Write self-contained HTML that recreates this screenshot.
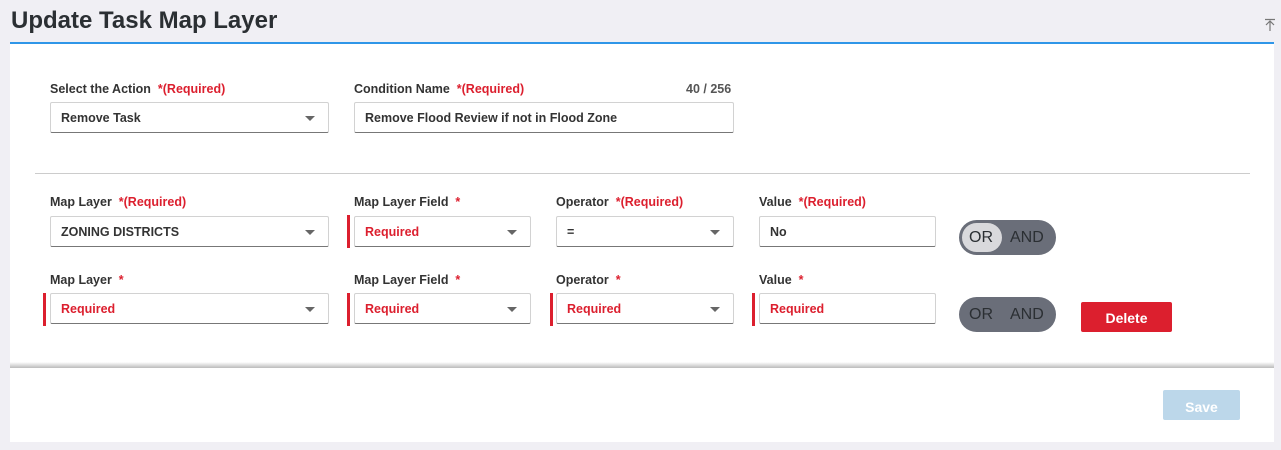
<!DOCTYPE html>
<html><head><style>
body{margin:0;width:1281px;height:450px;background:#f0eff4;font-family:"Liberation Sans",sans-serif;position:relative;overflow:hidden;color:#333}
.a{position:absolute}
h1{position:absolute;left:11px;top:7px;margin:0;font-size:24px;font-weight:bold;color:#2b2f33}
.lbl{position:absolute;font-size:12.5px;font-weight:bold;color:#333}
.lbl span{color:#dc1f2e}
.in{position:absolute;height:31px;background:#fff;border:1px solid #d2d2d2;border-bottom:1px solid #777;border-radius:2px;box-sizing:border-box;font-size:12.5px;font-weight:bold;line-height:30px;padding-left:10px;color:#333}
.in.r{color:#dc1f2e}
.in .c{position:absolute;right:13px;top:13px;width:0;height:0;border-left:5px solid transparent;border-right:5px solid transparent;border-top:5px solid #666}
.bar{position:absolute;width:3px;background:#dc1f2e}
.tog{position:absolute;width:97px;height:35px;border-radius:18px;background:#6a6e79;font-size:16px;color:#2b2f33;box-sizing:border-box}
.tog .k{position:absolute;left:3px;top:3px;width:40px;height:29px;border-radius:15px;background:#d9d9dc}
.tog .o{position:absolute;left:10px;top:9px}
.tog .n{position:absolute;left:51px;top:9px}
</style></head><body>
<h1>Update Task Map Layer</h1>
<div class="a" style="left:1264px;top:18px;font-size:13px;color:#777">
<svg width="12" height="14"><path d="M1 1.5H11M6 3V13M2 7L6 3L10 7" stroke="#777" fill="none" stroke-width="1.2"/></svg></div>
<div class="a" style="left:10px;top:42px;width:1264px;height:2px;background:#2f96e8"></div>
<div class="a" style="left:10px;top:44px;width:1264px;height:318px;background:#fff"></div>
<div class="a" style="left:10px;top:362px;width:1264px;height:6px;background:linear-gradient(#fff,#bbb)"></div>
<div class="a" style="left:10px;top:368px;width:1264px;height:74px;background:#fff"></div>

<div class="lbl" style="left:50px;top:82px">Select the Action &nbsp;<span>*(Required)</span></div>
<div class="in" style="left:50px;top:102px;width:279px">Remove Task<div class="c"></div></div>
<div class="lbl" style="left:354px;top:82px">Condition Name &nbsp;<span>*(Required)</span></div>
<div class="lbl" style="left:686px;top:82px;color:#555">40 / 256</div>
<div class="in" style="left:354px;top:102px;width:380px">Remove Flood Review if not in Flood Zone</div>

<div class="a" style="left:35px;top:173px;width:1215px;height:1px;background:#ccc"></div>

<div class="lbl" style="left:50px;top:195px">Map Layer &nbsp;<span>*(Required)</span></div>
<div class="in" style="left:50px;top:216px;width:279px">ZONING DISTRICTS<div class="c"></div></div>
<div class="lbl" style="left:354px;top:195px">Map Layer Field &nbsp;<span>*</span></div>
<div class="bar" style="left:347px;top:215px;height:33px"></div>
<div class="in r" style="left:354px;top:216px;width:177px">Required<div class="c"></div></div>
<div class="lbl" style="left:556px;top:195px">Operator &nbsp;<span>*(Required)</span></div>
<div class="in" style="left:556px;top:216px;width:178px">=<div class="c"></div></div>
<div class="lbl" style="left:759px;top:195px">Value &nbsp;<span>*(Required)</span></div>
<div class="in" style="left:759px;top:216px;width:177px">No</div>
<div class="tog" style="left:959px;top:220px"><div class="k"></div><span class="o">OR</span><span class="n">AND</span></div>

<div class="lbl" style="left:50px;top:273px">Map Layer &nbsp;<span>*</span></div>
<div class="bar" style="left:43px;top:293px;height:33px"></div>
<div class="in r" style="left:50px;top:293px;width:279px">Required<div class="c"></div></div>
<div class="lbl" style="left:354px;top:273px">Map Layer Field &nbsp;<span>*</span></div>
<div class="bar" style="left:347px;top:293px;height:33px"></div>
<div class="in r" style="left:354px;top:293px;width:177px">Required<div class="c"></div></div>
<div class="lbl" style="left:556px;top:273px">Operator &nbsp;<span>*</span></div>
<div class="bar" style="left:550px;top:293px;height:33px"></div>
<div class="in r" style="left:556px;top:293px;width:178px">Required<div class="c"></div></div>
<div class="lbl" style="left:759px;top:273px">Value &nbsp;<span>*</span></div>
<div class="bar" style="left:752px;top:293px;height:33px"></div>
<div class="in r" style="left:759px;top:293px;width:177px">Required</div>
<div class="tog" style="left:959px;top:297px"><span class="o">OR</span><span class="n">AND</span></div>
<div class="a" style="left:1081px;top:302px;width:91px;height:30px;background:#dc1f2e;border-radius:2px;color:#fff;font-weight:bold;font-size:14px;text-align:center;line-height:32px">Delete</div>

<div class="a" style="left:1163px;top:390px;width:77px;height:30px;background:#bcd7ea;border-radius:2px;color:#fff;font-weight:bold;font-size:14px;text-align:center;line-height:34px">Save</div>
</body></html>
